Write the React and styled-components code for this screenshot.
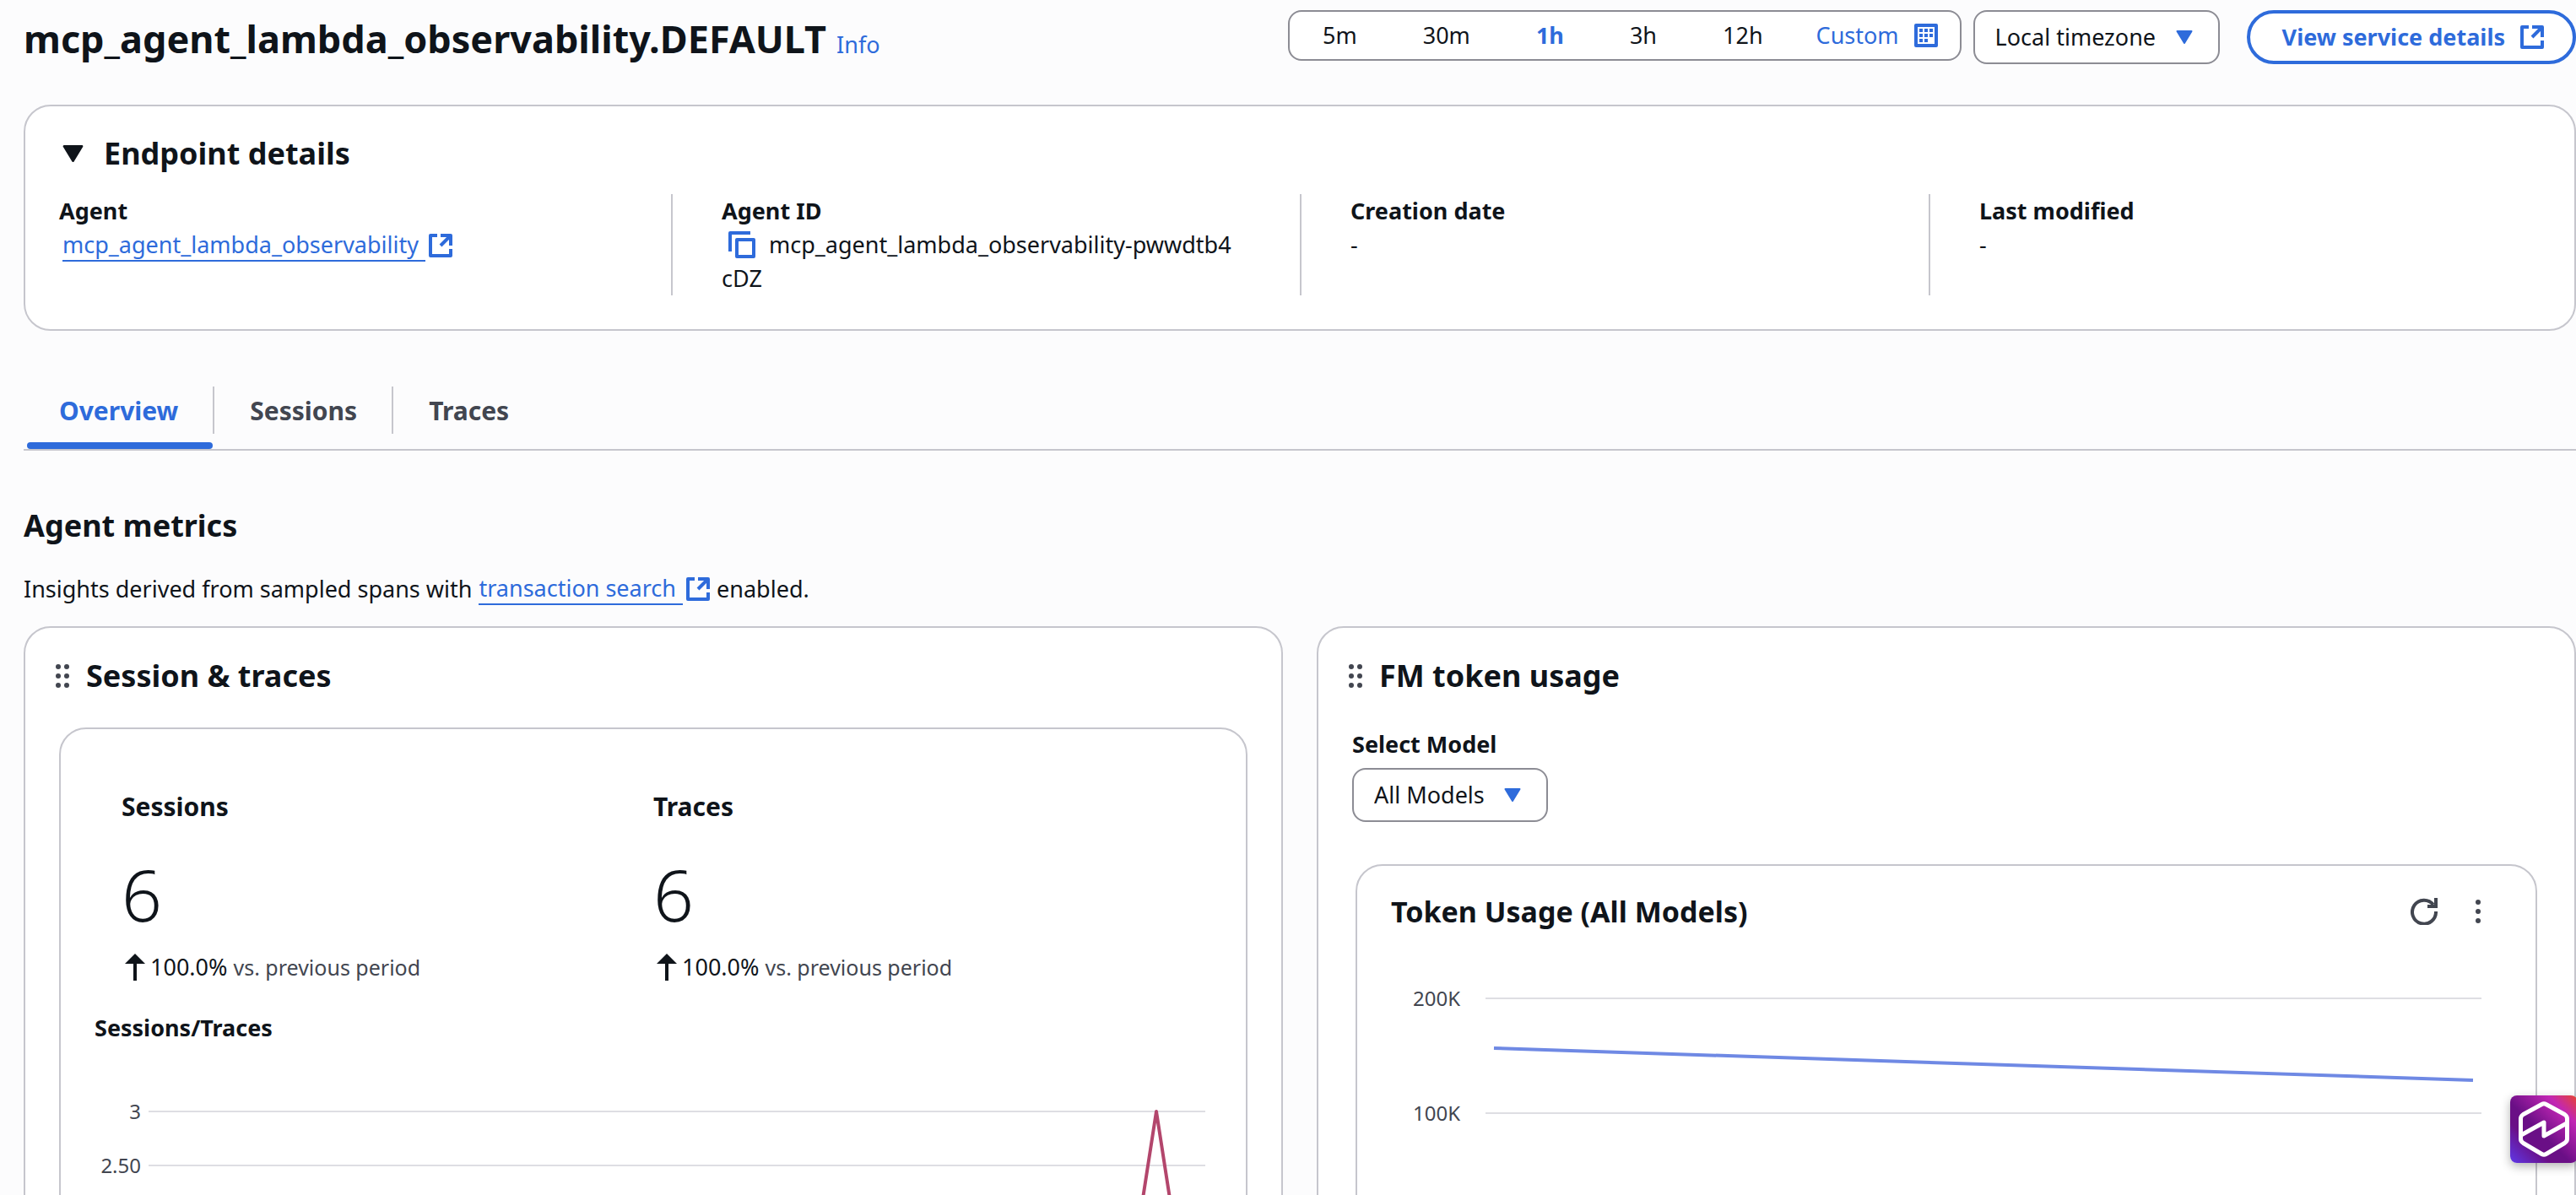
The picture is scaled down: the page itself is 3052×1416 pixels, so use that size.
import React from "react";
import styled, { createGlobalStyle, css } from "styled-components";

const blue = "#2e6bdb";
const ink = "#0f141a";
const muted = "#424650";
const line = "#c6c6cd";

const Global = createGlobalStyle`
  *, *::before, *::after { box-sizing: border-box; }
  body { margin: 0; background: #fcfcfd; color: ${ink}; font-family: "Noto Sans", "Liberation Sans", sans-serif; font-size: 27px; line-height: 40px; }
  h1, h2, h3, p, dl, dt, dd { margin: 0; font-size: inherit; font-weight: inherit; }
  button, select { font: inherit; color: inherit; }
`;

const Page = styled.main`
  height: 100vh;
  overflow: hidden;
  padding-left: 28px;
`;

const Header = styled.header`
  display: flex;
  justify-content: space-between;
  align-items: flex-start;
  height: 124px;
`;

const TitleGroup = styled.div`
  display: flex;
  align-items: baseline;
  gap: 12px;
`;

const PageTitle = styled.h1`
  && { font-size: 45px; font-weight: 700; line-height: 92px; }
`;

const TextLink = styled.a`
  color: ${blue};
  text-decoration: none;
  ${(p) => p.$underlined && css`
    display: inline-flex;
    align-items: center;
    gap: 4px;
    span { border-bottom: 2px solid ${blue}; line-height: 36px; padding-right: 8px; }
  `}
`;

const Actions = styled.div`
  display: flex;
  padding-top: 12px;
`;

const RangeGroup = styled.div`
  display: flex;
  height: 60px;
  border: 2px solid #8c8c94;
  border-radius: 16px;
  background: #fff;
  margin-right: 14px;
`;

const RangeButton = styled.button`
  display: flex;
  align-items: center;
  gap: 18px;
  border: 0;
  background: none;
  padding: 0 39px;
  ${(p) => p.$active && css`color: ${blue}; font-weight: 700;`}
  ${(p) => p.$custom && css`color: ${blue}; padding: 0 26px 0 24px;`}
`;

const SelectBox = styled.div`
  display: inline-grid;
  grid-template-columns: ${(p) => p.$width}px;
  align-items: center;
  height: 64px;
  select, svg { grid-area: 1 / 1; }
  svg { justify-self: end; margin-right: 32px; pointer-events: none; }
`;

const Select = styled.select`
  appearance: none;
  width: 100%;
  height: 64px;
  border: 2px solid #8c8c94;
  border-radius: 16px;
  background: #fff;
  padding: 0 24px;
`;

const DetailsButton = styled.button`
  display: flex;
  align-items: center;
  gap: 18px;
  height: 64px;
  margin-left: 32px;
  padding: 0 34px 0 38px;
  border: 4px solid ${blue};
  border-radius: 32px;
  background: #fff;
  color: ${blue};
  font-weight: 700;
`;

const Card = styled.section`
  border: 2px solid ${line};
  border-radius: 32px;
  background: #fff;
`;

const EndpointCard = styled(Card)`
  height: 268px;
  padding: 32px 18px 0 22px;
`;

const Toggle = styled.button`
  display: flex;
  align-items: center;
  gap: 24px;
  border: 0;
  background: none;
  padding: 0 22px;
  height: 48px;
  margin-bottom: 24px;
`;

const Heading = styled.h2`
  && { font-size: 36px; font-weight: 700; line-height: 46px; }
`;

const Details = styled.dl`
  display: grid;
  grid-template-columns: repeat(4, 1fr);
`;

const Detail = styled.div`
  min-height: 120px;
  padding: 0 72px 0 58px;
  border-right: 2px solid ${line};
  word-break: break-all;
  &:first-child { padding-left: 18px; }
  &:last-child { border-right: 0; }
  dt { font-weight: 700; }
`;

const AgentLink = styled(TextLink)`
  padding-left: 4px;
`;

const CopyButton = styled.button`
  border: 0;
  background: none;
  padding: 0 8px;
  margin-right: 8px;
  height: 32px;
  vertical-align: top;
  svg { display: block; margin-top: 4px; }
`;

const Tabs = styled.nav`
  display: flex;
  margin-top: 66px;
  height: 76px;
  border-bottom: 2px solid ${line};
`;

const Tab = styled.button`
  position: relative;
  border: 0;
  border-right: ${(p) => (p.$last ? 0 : 2)}px solid ${line};
  background: none;
  height: 56px;
  padding: 2px 41px 0 42px;
  color: ${(p) => (p.$active ? blue : muted)};
  font-size: 30px;
  font-weight: 700;
  &::after {
    content: "";
    display: ${(p) => (p.$active ? "block" : "none")};
    position: absolute;
    left: 4px;
    right: 0;
    bottom: -18px;
    height: 8px;
    border-radius: 4px;
    background: ${blue};
  }
`;

const MetricsHeading = styled(Heading)`
  margin-top: 66px;
`;

const Intro = styled.p`
  display: flex;
  gap: 8px;
  && { margin: 32px 0 24px; }
`;

const Grid = styled.div`
  display: grid;
  grid-template-columns: 1fr 1fr;
  gap: 40px;
`;

const Widget = styled(Card)`
  padding: 34px 40px 40px;
`;

const WidgetTitle = styled.div`
  display: flex;
  align-items: center;
  gap: 20px;
  margin-left: -4px;
  margin-bottom: 38px;
`;

const StatsPanel = styled(Card)`
  padding: 64px 40px;
`;

const Stats = styled.div`
  display: grid;
  grid-template-columns: 630px 1fr;
  padding-left: 32px;
`;

const StatName = styled.h3`
  && { font-size: 30px; font-weight: 700; line-height: 56px; }
`;

const StatValue = styled.div`
  font-size: 84px;
  font-weight: 300;
  line-height: 96px;
  margin: 28px 0 18px;
`;

const Change = styled.div`
  display: flex;
  align-items: center;
  gap: 6px;
  padding-left: 4px;
  span { color: ${muted}; font-size: 25px; }
`;

const ChartTitle = styled.h3`
  && { font-weight: 700; margin-top: 32px; }
`;

const Chart = styled.svg`
  display: block;
  width: 100%;
  overflow: visible;
  text { font-size: 24px; fill: ${muted}; }
`;

const Field = styled.div`
  display: flex;
  flex-direction: column;
  align-items: flex-start;
  label { font-weight: 700; margin-bottom: 8px; }
`;

const TokenPanel = styled(Card)`
  margin: 50px 4px 0;
  padding: 30px 40px;
`;

const PanelHead = styled.div`
  display: flex;
  align-items: center;
  justify-content: space-between;
`;

const PanelTitle = styled.h3`
  && { font-size: 34px; font-weight: 700; line-height: 48px; }
`;

const IconButtons = styled.div`
  display: flex;
  gap: 32px;
  margin-right: 12px;
`;

const IconButton = styled.button`
  display: flex;
  border: 0;
  background: none;
  padding: 0;
`;

const Launcher = styled.button`
  position: fixed;
  right: -2px;
  bottom: 38px;
  width: 80px;
  height: 80px;
  padding: 0;
  border: 0;
  border-radius: 8px;
  background: linear-gradient(45deg, #5f38e8 0%, #6a0f86 30%, #6a0f86 45%, #c226b4 78%, #e8452c 100%);
  box-shadow: 0 4px 12px rgba(0, 0, 0, 0.3);
  svg { display: block; }
`;

const External = () => (
  <svg width="28" height="28" viewBox="0 0 28 28" fill="none" stroke={blue} strokeWidth="4" strokeLinejoin="round" aria-hidden="true">
    <path d="M10 2H2v24h24v-8M14 2h12v12M26 2L14 14" />
  </svg>
);

const Caret = ({ color = blue, width = 20 }) => (
  <svg width={width} height={width * 0.8} viewBox="0 0 20 16" aria-hidden="true">
    <path d="M1.5 1h17L10 15z" fill={color} stroke={color} strokeWidth="2" strokeLinejoin="round" />
  </svg>
);

const Calendar = () => (
  <svg width="28" height="28" viewBox="0 0 28 28" aria-hidden="true">
    <path d="M2 2h24v24H2z" fill="none" stroke={blue} strokeWidth="4" strokeLinejoin="round" />
    <path d="M6 8h4m2 0h4m2 0h4M6 14h4m2 0h4m2 0h4M6 20h4m2 0h4" stroke={blue} strokeWidth="4" />
  </svg>
);

const Copy = () => (
  <svg width="32" height="32" viewBox="0 0 32 32" fill="none" stroke={blue} strokeWidth="4" strokeLinejoin="round" aria-hidden="true">
    <path d="M10 10h20v20H10zM2 24V2h24" />
  </svg>
);

const Grip = () => (
  <svg width="16" height="28" viewBox="0 0 16 28" fill={muted} aria-hidden="true">
    {[3, 14, 25].map((y) => [3, 13].map((x) => <circle key={x + "-" + y} cx={x} cy={y} r="3" />))}
  </svg>
);

const ArrowUp = () => (
  <svg width="24" height="32" viewBox="0 0 24 32" aria-hidden="true">
    <path d="M0 12L12 0l12 12z" fill={ink} />
    <path d="M12 8v24" stroke={ink} strokeWidth="4" />
  </svg>
);

const ranges = ["5m", "30m", "1h", "3h", "12h"];

const Stat = ({ name, value }) => (
  <div>
    <StatName>{name}</StatName>
    <StatValue>{value}</StatValue>
    <Change><ArrowUp /><div>100.0% <span>vs. previous period</span></div></Change>
  </div>
);

export default function App() {
  return (
    <Page>
      <Global />
      <Header>
        <TitleGroup>
          <PageTitle>mcp_agent_lambda_observability.DEFAULT</PageTitle>
          <TextLink href="#info">Info</TextLink>
        </TitleGroup>
        <Actions>
          <RangeGroup>
            {ranges.map((r) => <RangeButton key={r} $active={r === "1h"}>{r}</RangeButton>)}
            <RangeButton $custom>Custom <Calendar /></RangeButton>
          </RangeGroup>
          <SelectBox $width={292}>
            <Select aria-label="Timezone"><option>Local timezone</option></Select>
            <Caret />
          </SelectBox>
          <DetailsButton>View service details <External /></DetailsButton>
        </Actions>
      </Header>

      <EndpointCard>
        <Toggle aria-expanded="true">
          <Caret color={ink} width={25} />
          <Heading>Endpoint details</Heading>
        </Toggle>
        <Details>
          <Detail>
            <dt>Agent</dt>
            <dd><AgentLink href="#agent" $underlined><span>mcp_agent_lambda_observability</span><External /></AgentLink></dd>
          </Detail>
          <Detail>
            <dt>Agent ID</dt>
            <dd><CopyButton aria-label="Copy agent ID"><Copy /></CopyButton>mcp_agent_lambda_observability-pwwdtb4cDZ</dd>
          </Detail>
          <Detail><dt>Creation date</dt><dd>-</dd></Detail>
          <Detail><dt>Last modified</dt><dd>-</dd></Detail>
        </Details>
      </EndpointCard>

      <Tabs>
        <Tab $active>Overview</Tab>
        <Tab>Sessions</Tab>
        <Tab $last>Traces</Tab>
      </Tabs>

      <MetricsHeading>Agent metrics</MetricsHeading>
      <Intro>
        Insights derived from sampled spans with
        <TextLink href="#search" $underlined><span>transaction search</span><External /></TextLink>
        enabled.
      </Intro>

      <Grid>
        <Widget>
          <WidgetTitle><Grip /><Heading>Session &amp; traces</Heading></WidgetTitle>
          <StatsPanel>
            <Stats>
              <Stat name="Sessions" value="6" />
              <Stat name="Traces" value="6" />
            </Stats>
            <ChartTitle>Sessions/Traces</ChartTitle>
            <Chart viewBox="0 0 1324 480" role="img" aria-label="Sessions and traces over time">
              <g textAnchor="end">
                <text x="55" y="88">3</text>
                <text x="55" y="152">2.50</text>
              </g>
              <path d="M64 79h1252M64 143h1252" stroke="#dedee3" strokeWidth="2" />
              <path d="M1198 466L1258 79l60 387" fill="none" stroke="#b3466c" strokeWidth="4" strokeLinejoin="round" />
            </Chart>
          </StatsPanel>
        </Widget>

        <Widget>
          <WidgetTitle><Grip /><Heading>FM token usage</Heading></WidgetTitle>
          <Field>
            <label htmlFor="model">Select Model</label>
            <SelectBox $width={232}>
              <Select id="model"><option>All Models</option></Select>
              <Caret />
            </SelectBox>
          </Field>
          <TokenPanel>
            <PanelHead>
              <PanelTitle>Token Usage (All Models)</PanelTitle>
              <IconButtons>
                <IconButton aria-label="Refresh">
                  <svg width="32" height="32" viewBox="0 0 32 32" fill="none" stroke={muted} strokeWidth="4">
                    <path d="M30 16A14 14 0 1 1 27 8M30 0v10H20" />
                  </svg>
                </IconButton>
                <IconButton aria-label="More actions">
                  <svg width="32" height="32" viewBox="0 0 32 32" fill={muted}>
                    <circle cx="16" cy="5" r="3" /><circle cx="16" cy="16" r="3" /><circle cx="16" cy="27" r="3" />
                  </svg>
                </IconButton>
              </IconButtons>
            </PanelHead>
            <Chart viewBox="0 0 1316 400" role="img" aria-label="Token usage over time">
              <g textAnchor="end">
                <text x="82" y="88">200K</text>
                <text x="82" y="224">100K</text>
              </g>
              <path d="M112 79h1180M112 215h1180" stroke="#dedee3" strokeWidth="2" />
              <path d="M122 138L1282 176" stroke="#6f89e4" strokeWidth="4" />
            </Chart>
          </TokenPanel>
        </Widget>
      </Grid>

      <Launcher aria-label="Open assistant">
        <svg width="80" height="80" viewBox="0 0 80 80" fill="none" stroke="#fff" strokeWidth="5" strokeLinejoin="round">
          <path d="M37.500 10.500Q40 9 42.500 10.500L64.500 22.500Q67.500 24.500 67.500 27.500V51.500Q67.500 54.500 64.500 56.500L42.500 69.500Q40 71 37.500 69.500L15.500 56.500Q12.500 54.500 12.500 51.500V27.500Q12.500 24.500 15.500 22.500Z" />
          <path d="M13 47L40 32v16l27-15" />
        </svg>
      </Launcher>
    </Page>
  );
}
